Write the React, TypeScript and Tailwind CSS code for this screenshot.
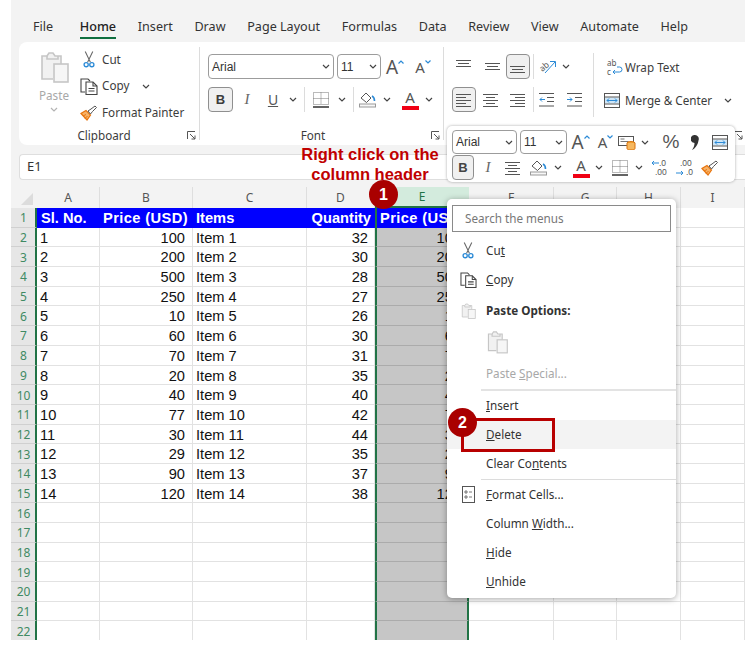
import type { ReactNode } from "react";

const TABS = ["File", "Home", "Insert", "Draw", "Page Layout", "Formulas", "Data", "Review", "View", "Automate", "Help"];
const COLS = ["A", "B", "C", "D", "E", "F", "G", "H", "I"];
const ROWS = [
  [1, 100, 32], [2, 200, 30], [3, 500, 28], [4, 250, 27], [5, 10, 26], [6, 60, 30], [7, 70, 31],
  [8, 20, 35], [9, 40, 40], [10, 77, 42], [11, 30, 44], [12, 29, 35], [13, 90, 37], [14, 120, 38],
];
const EMPTY_ROWS = [16, 17, 18, 19, 20, 21, 22];

const Chev = ({ className = "" }: { className?: string }) => (
  <svg viewBox="0 0 8 5" className={`h-[5px] w-[8px] ${className}`} fill="none" stroke="#444" strokeWidth="1.2">
    <path d="M1 1l3 3 3-3" />
  </svg>
);

const Launcher = () => (
  <svg viewBox="0 0 9 9" className="h-[9px] w-[9px]" fill="none" stroke="#555" strokeWidth="1">
    <path d="M.5 8V.5H8M3 3l5 5M8 4.5V8H4.5" />
  </svg>
);

const PasteIcon = ({ className = "" }: { className?: string }) => (
  <svg viewBox="0 0 29 32" className={className} fill="none" stroke="#c6c6c6" strokeWidth="1.6">
    <path d="M13 28H2V5h5l2-3h4l2 3h6v8" fill="#f1f1f1" />
    <path d="M7 5v3h11V5" />
    <rect x="14" y="13" width="14" height="18" fill="#f6f6f6" />
  </svg>
);

const Scissors = ({ className = "" }: { className?: string }) => (
  <svg viewBox="0 0 12 18" className={className} fill="none" strokeWidth="1.1">
    <path d="M2 .5l5.5 11.5M10 .5L4.5 12" stroke="#666" />
    <circle cx="3" cy="14.5" r="2.2" stroke="#2b8ad6" strokeWidth="1.4" />
    <circle cx="9" cy="14.5" r="2.2" stroke="#2b8ad6" strokeWidth="1.4" />
  </svg>
);

const CopyIcon = ({ className = "" }: { className?: string }) => (
  <svg viewBox="0 0 18 17" className={className} fill="none" stroke="#444" strokeWidth="1.1">
    <path d="M5 14H1V1h7l2 2" />
    <path d="M6 4h7l4 4v8.5H6z" fill="#fff" />
    <path d="M13 4v4h4M8.5 10.5h6M8.5 13h6" />
  </svg>
);

const Painter = ({ className = "" }: { className?: string }) => (
  <svg viewBox="0 0 18 16" className={className} fill="none">
    <path d="M1 8.500l6 6.500 3.500-5-4.500-4.500z" fill="#f7b267" stroke="#e8750f" strokeWidth="1.2" />
    <path d="M3 11l3-1.500M5 13.500l2.500-2.500" stroke="#e8750f" />
    <path d="M8 6l2.500 3 2-2.500 4-4-1.500-1.500-4 3z" fill="#fff" stroke="#555" />
  </svg>
);

// three or five text lines, used by all the alignment buttons
const Lines = ({ rows, className = "" }: { rows: [number, number, number][]; className?: string }) => (
  <svg viewBox="0 0 16 14" className={`h-[14px] w-[16px] ${className}`} fill="none" stroke="#555" strokeWidth="1">
    {rows.map(([a, b, y]) => (
      <path key={y} d={`M${a} ${y}.5H${b}`} />
    ))}
  </svg>
);

const TOP: [number, number, number][] = [[0, 15, 0], [2, 13, 3], [0, 15, 6]];
const MID: [number, number, number][] = [[0, 15, 3], [2, 13, 6], [0, 15, 9]];
const BOT: [number, number, number][] = [[0, 15, 6], [2, 13, 9], [0, 15, 12]];
const LEFT: [number, number, number][] = [[0, 15, 1], [0, 10, 4], [0, 15, 7], [0, 10, 10], [0, 15, 13]];
const CENTER: [number, number, number][] = [[0, 15, 1], [3, 12, 4], [0, 15, 7], [3, 12, 10], [0, 15, 13]];
const RIGHT: [number, number, number][] = [[0, 15, 1], [5, 15, 4], [0, 15, 7], [5, 15, 10], [0, 15, 13]];

const Indent = ({ out }: { out?: boolean }) => (
  <svg viewBox="0 0 16 14" className="h-[14px] w-[16px]" fill="none" strokeWidth="1">
    <path d="M0 .5h15M8 4.500h7M8 8.500h7M0 13h15" stroke="#555" />
    <path d={out ? "M6 6.500H1M3 4.500l-2 2 2 2" : "M0 6.500h5M3 4.500l2 2-2 2"} stroke="#2b8ad6" />
  </svg>
);

const Borders = () => (
  <svg viewBox="0 0 16 16" className="h-[16px] w-[16px]" fill="none">
    <path d="M.5.5h15v12H.5zM8 .5v12M.5 6.500h15" stroke="#777" strokeDasharray="1 1" />
    <path d="M0 15h16" stroke="#222" strokeWidth="1.4" />
  </svg>
);

const FillIcon = () => (
  <svg viewBox="0 0 18 17" className="h-[17px] w-[18px]" fill="none">
    <path d="M2 7l5-5 5 5-4.500 4.500z" stroke="#555" fill="#fff" />
    <path d="M13 5c2 1 2.500 3 2.500 5" stroke="#2b8ad6" strokeWidth="1.600" />
    <rect x=".5" y="13" width="16" height="3" stroke="#999" fill="#f7f7f7" />
  </svg>
);

const FontColor = () => (
  <span className="flex h-[21px] w-[18px] flex-col items-center justify-end">
    <span className="text-[15px] leading-[15px] text-[#555]">A</span>
    <span className="mt-[1px] h-[4px] w-[17px] bg-[#f00014]" />
  </span>
);

const MergeIcon = () => (
  <svg viewBox="0 0 16 15" className="h-[15px] w-[16px]" fill="none">
    <path d="M1 4.500h14v6H1z" fill="#cfe6f7" />
    <rect x=".5" y=".5" width="15" height="14" stroke="#555" />
    <path d="M.5 4h15M.5 11h15" stroke="#555" />
    <path d="M3 7.500h10M5 5.500l-2 2 2 2M11 5.500l2 2-2 2" stroke="#2b8ad6" />
  </svg>
);

const Grow = ({ up }: { up?: boolean }) => (
  <span className="flex items-start">
    <span className={up ? "text-[19px] leading-[20px] text-[#555]" : "text-[15px] leading-[20px] text-[#555]"}>A</span>
    <svg viewBox="0 0 6 4" className="mt-[3px] h-[4px] w-[6px]" fill="none" stroke="#2b8ad6" strokeWidth="1.2">
      <path d={up ? "M.5 3.500l2.500-2.500 2.500 2.500" : "M.5.5l2.500 2.500 2.500-2.500"} />
    </svg>
  </span>
);

const Select = ({ label, className = "" }: { label: string; className?: string }) => (
  <span className={`flex items-center justify-between rounded-[4px] border border-[#9c9c9c] bg-white pl-[3px] pr-[3px] font-[Liberation_Sans,sans-serif] text-[12px] text-[#333] ${className}`}>
    {label}
    <Chev />
  </span>
);

const Slot = ({ className = "", children }: { className?: string; children: ReactNode }) => (
  <span className={`flex shrink-0 items-center justify-center ${className}`}>{children}</span>
);

const Sep = ({ className = "" }: { className?: string }) => <span className={`w-px shrink-0 bg-[#dcdcdc] ${className}`} />;

const Active = ({ className = "", children }: { className?: string; children: ReactNode }) => (
  <span className={`flex shrink-0 items-center justify-center rounded-[4px] border border-[#8f8f8f] bg-[#f0f0f0] ${className}`}>{children}</span>
);

function Ribbon() {
  return (
    <div className="flex h-[103px] rounded-l-lg bg-white text-[11.7px] text-[#3c3c3c]">
      {/* clipboard */}
      <div className="flex w-[180px] flex-col">
        <div className="flex h-[84px]">
          <div className="ml-[18px] flex w-[34px] flex-col items-center pt-[9px] text-[#a8a8a8]">
            <PasteIcon className="h-[32px] w-[29px]" />
            <span className="mt-[4px] leading-[16px]">Paste</span>
            <Chev className="mt-[4px] opacity-40" />
          </div>
          <div className="ml-[8px] flex flex-col pt-[4px]">
            <div className="flex h-[27px] items-center">
              <Slot className="w-[20px]"><Scissors className="h-[17px] w-[12px]" /></Slot>
              <span className="ml-[3px]">Cut</span>
            </div>
            <div className="flex h-[27px] items-center">
              <Slot className="w-[20px]"><CopyIcon className="h-[17px] w-[18px]" /></Slot>
              <span className="ml-[3px]">Copy</span>
              <Chev className="ml-[13px]" />
            </div>
            <div className="flex h-[27px] items-center">
              <Slot className="w-[20px]"><Painter className="h-[16px] w-[18px]" /></Slot>
              <span className="ml-[3px]">Format Painter</span>
            </div>
          </div>
        </div>
        <div className="flex items-center">
          <span className="ml-[2px] w-[166px] text-center leading-[18px]">Clipboard</span>
          <Launcher />
        </div>
      </div>
      <Sep className="my-[5px]" />

      {/* font */}
      <div className="flex w-[243px] flex-col">
        <div className="flex h-[84px] flex-col gap-[8px] pl-[8px] pt-[12px]">
          <div className="flex h-[25px]">
            <Select label="Arial" className="w-[126px]" />
            <Select label="11" className="ml-[3px] w-[44px]" />
            <Slot className="w-[28px]"><Grow up /></Slot>
            <Slot className="w-[28px]"><Grow /></Slot>
          </div>
          <div className="flex h-[25px] items-center">
            <Active className="h-[25px] w-[25px] font-[Liberation_Sans,sans-serif] text-[13px] font-bold">B</Active>
            <Slot className="w-[28px] font-[Liberation_Serif,serif] text-[15px] italic text-[#666]">I</Slot>
            <Slot className="w-[24px] text-[14px] text-[#555] underline">U</Slot>
            <Slot className="w-[16px]"><Chev /></Slot>
            <Sep className="ml-[3px] h-[25px]" />
            <Slot className="ml-[5px] w-[22px]"><Borders /></Slot>
            <Slot className="ml-[2px] w-[16px]"><Chev /></Slot>
            <Sep className="ml-[3px] h-[25px]" />
            <Slot className="ml-[3px] w-[22px]"><FillIcon /></Slot>
            <Slot className="w-[16px]"><Chev /></Slot>
            <Slot className="ml-[4px] w-[22px]"><FontColor /></Slot>
            <Slot className="w-[16px]"><Chev /></Slot>
          </div>
        </div>
        <div className="flex items-center">
          <span className="w-[226px] text-center leading-[18px]">Font</span>
          <span className="ml-[5px]"><Launcher /></span>
        </div>
      </div>
      <Sep className="my-[5px]" />

      {/* alignment */}
      <div className="flex flex-1 flex-col">
        <div className="flex h-[84px]">
          <div className="flex w-[149px] flex-col gap-[8px] pl-[8px] pt-[12px]">
            <div className="flex h-[25px] items-center">
              <Slot className="w-[24px]"><Lines rows={TOP} /></Slot>
              <Slot className="ml-[3px] w-[27px]"><Lines rows={MID} /></Slot>
              <Active className="h-[25px] w-[24px]"><Lines rows={BOT} /></Active>
              <Sep className="ml-[3px] h-[25px]" />
              <Slot className="ml-[3px] w-[22px]">
                <svg viewBox="0 0 18 16" className="h-[16px] w-[18px] overflow-visible" fill="none">
                  <text x="1" y="11" fontSize="8.500" fill="#555" transform="rotate(-40 5 9)">ab</text>
                  <path d="M6 14L16 3M11 2.500h5.500V8" stroke="#2b8ad6" />
                </svg>
              </Slot>
              <Slot className="ml-[1px] w-[12px]"><Chev /></Slot>
            </div>
            <div className="flex h-[25px] items-center">
              <Active className="h-[25px] w-[24px]"><Lines rows={LEFT} /></Active>
              <Slot className="ml-[3px] w-[24px]"><Lines rows={CENTER} /></Slot>
              <Slot className="ml-[3px] w-[24px]"><Lines rows={RIGHT} /></Slot>
              <Sep className="ml-[3px] h-[25px]" />
              <Slot className="w-[26px]"><Indent out /></Slot>
              <Slot className="ml-[1px] w-[27px]"><Indent /></Slot>
            </div>
          </div>
          <Sep className="mt-[11px] h-[64px]" />
          <div className="flex flex-col gap-[8px] pl-[10px] pt-[13px]">
            <div className="flex h-[25px] items-center">
              <Slot className="w-[21px]">
                <svg viewBox="0 0 16 17" className="h-[17px] w-[16px] overflow-visible" fill="none">
                  <text x="0" y="6.500" fontSize="8" fill="#555">ab</text>
                  <text x="0" y="16" fontSize="8" fill="#555">c</text>
                  <path d="M10 8h2.500a2.500 2.500 0 0 1 0 5H6M8 11l-2 2 2 2" stroke="#2b8ad6" />
                </svg>
              </Slot>
              <span>Wrap Text</span>
            </div>
            <div className="flex h-[25px] items-center">
              <span className="flex w-[21px] shrink-0"><MergeIcon /></span>
              <span>Merge &amp; Center</span>
              <Chev className="ml-[12px]" />
            </div>
          </div>
        </div>
        <div className="flex h-[18px] items-center justify-end pr-[2px]">
          <Launcher />
        </div>
      </div>
    </div>
  );
}

function Sheet() {
  const cell = "truncate border-b border-r border-[#e2e2e2] bg-white px-[3px] h-[19.7px] leading-[20px]";
  const rowHead = "flex h-[19.7px] items-center justify-center border-b border-r-2 border-b-[#d0d0d0] border-r-[#217346] bg-[#e6e6e6] pl-[1px] pt-[2px] font-[Noto_Sans,sans-serif] text-[12px] text-[#3f8a63]";
  const selected = "h-[19.7px] truncate border-x-2 border-b border-x-[#217346] border-b-[#ababab] bg-[#c6c6c6] pr-[6px] text-right leading-[20px]";
  const head = "h-[19.7px] whitespace-nowrap bg-[#0000ff] font-bold leading-[20px] text-white";
  return (
    <div className="grid h-[453px] grid-cols-[26px_63px_93px_114px_68px_94px_85px_63px_64px_64px] content-start overflow-hidden bg-white font-[Liberation_Sans,Arial,sans-serif] text-[14.67px] text-[#111]">
      <div className="flex h-[21px] items-end justify-center bg-[#f3f3f3] pb-[3px] pl-[6px]">
        <svg viewBox="0 0 12 12" className="h-[12px] w-[12px]"><path d="M12 0v12H0z" fill="#dcdcdc" /></svg>
      </div>
      {COLS.map((c) => (
        <div
          key={c}
          className={
            c === "E"
              ? "flex h-[21px] items-center justify-center border-b-2 border-[#217346] bg-[#d3ebdd] font-[Noto_Sans,sans-serif] text-[12px] text-[#217346]"
              : "flex h-[21px] items-center justify-center border-r border-[#dedede] bg-[#f3f3f3] font-[Noto_Sans,sans-serif] text-[12px] text-[#555]"
          }
        >
          {c}
        </div>
      ))}

      <div className={rowHead}>1</div>
      <div className={`${head} px-[4px]`}>Sl. No.</div>
      <div className={`${head} pl-[3px] tracking-[0.4px]`}>Price (USD)</div>
      <div className={`${head} px-[3px]`}>Items</div>
      <div className={`${head} pr-[4px] text-right`}>Quantity</div>
      <div className={`${head} overflow-hidden border-x-2 border-x-[#217346] pl-[3px] tracking-[0.4px]`}>Price (USD)</div>
      {["F", "G", "H", "I"].map((c) => (
        <div key={c} className={cell} />
      ))}

      {ROWS.map(([n, price, qty]) => (
        <div key={n} className="contents">
          <div className={rowHead}>{n + 1}</div>
          <div className={cell}>{n}</div>
          <div className={`${cell} pr-[7px] text-right`}>{price}</div>
          <div className={cell}>Item {n}</div>
          <div className={`${cell} pr-[6px] text-right`}>{qty}</div>
          <div className={selected}>{price}</div>
          {["F", "G", "H", "I"].map((c) => (
            <div key={c} className={cell} />
          ))}
        </div>
      ))}

      {EMPTY_ROWS.map((n) => (
        <div key={n} className="contents">
          <div className={rowHead}>{n}</div>
          {["A", "B", "C", "D"].map((c) => (
            <div key={c} className={cell} />
          ))}
          <div className={selected} />
          {["F", "G", "H", "I"].map((c) => (
            <div key={c} className={cell} />
          ))}
        </div>
      ))}
    </div>
  );
}

function MiniToolbar() {
  return (
    <div className="absolute left-[447px] top-[126px] flex h-[56px] w-[288px] flex-col rounded-[5px] bg-white pl-[5px] pt-[4px] text-[#444] shadow-[0_0_3px_rgba(0,0,0,0.35)]">
      <div className="flex h-[24px] items-center">
        <Select label="Arial" className="h-[24px] w-[65px]" />
        <Select label="11" className="ml-[3px] h-[24px] w-[47px]" />
        <Slot className="ml-[1px] w-[25px]"><Grow up /></Slot>
        <Slot className="w-[25px]"><Grow /></Slot>
        <Slot className="w-[18px]">
          <svg viewBox="0 0 18 15" className="h-[15px] w-[18px]" fill="none">
            <rect x=".5" y="1.500" width="15" height="9" stroke="#555" />
            <path d="M2.500 4h4M2.500 6.500h8" stroke="#777" />
            <ellipse cx="13" cy="8" rx="4" ry="1.500" fill="#f0a030" stroke="#d9730d" />
            <path d="M9 8v5.500c0 2 8 2 8 0V8" fill="#f6b860" stroke="#d9730d" />
          </svg>
        </Slot>
        <Slot className="w-[18px]"><Chev /></Slot>
        <Slot className="ml-[5px] w-[24px] font-[Liberation_Sans,sans-serif] text-[19px] text-[#555]">%</Slot>
        <Slot className="w-[24px]">
          <svg viewBox="0 0 8 15" className="h-[15px] w-[8px]"><path d="M4 0a4 4 0 0 1 3.500 5.500C7 9 5 13 1 15c2-3 2.500-5 2.500-7A4 4 0 0 1 4 0z" fill="#333" /></svg>
        </Slot>
        <Slot className="ml-[1px] w-[24px]"><MergeIcon /></Slot>
      </div>
      <div className="mt-[1px] flex h-[25px] items-center">
        <Active className="h-[25px] w-[22px] font-[Liberation_Sans,sans-serif] text-[13px] font-bold">B</Active>
        <Slot className="w-[28px] font-[Liberation_Serif,serif] text-[15px] italic text-[#666]">I</Slot>
        <Slot className="w-[22px]"><Lines rows={CENTER} /></Slot>
        <Slot className="ml-[3px] w-[24px]"><FillIcon /></Slot>
        <Slot className="w-[14px]"><Chev /></Slot>
        <Slot className="ml-[5px] w-[22px]"><FontColor /></Slot>
        <Slot className="w-[14px]"><Chev /></Slot>
        <Slot className="ml-[3px] w-[22px]"><Borders /></Slot>
        <Slot className="w-[16px]"><Chev /></Slot>
        <Slot className="ml-[1px] w-[24px]">
          <span className="relative h-[18px] w-[18px] font-[Liberation_Sans,sans-serif] text-[8.5px] leading-[9px] text-[#555]">
            <span className="block pl-[8px]">.0</span>
            <span className="block pl-[4px]">.00</span>
            <svg viewBox="0 0 8 6" className="absolute left-0 top-[1px] h-[6px] w-[8px]" fill="none" stroke="#2b8ad6"><path d="M8 3H1M3 1L1 3l2 2" /></svg>
          </span>
        </Slot>
        <Slot className="ml-[1px] w-[24px]">
          <span className="relative h-[18px] w-[18px] font-[Liberation_Sans,sans-serif] text-[8.5px] leading-[9px] text-[#555]">
            <span className="block pl-[4px]">.00</span>
            <span className="block pl-[10px]">.0</span>
            <svg viewBox="0 0 8 6" className="absolute left-0 top-[11px] h-[6px] w-[8px]" fill="none" stroke="#2b8ad6"><path d="M0 3h7M5 1l2 2-2 2" /></svg>
          </span>
        </Slot>
        <Slot className="w-[26px]"><Painter className="h-[16px] w-[18px]" /></Slot>
      </div>
    </div>
  );
}

const MenuItem = ({ icon, children, className = "" }: { icon?: ReactNode; children: ReactNode; className?: string }) => (
  <div className={`flex h-[29px] shrink-0 items-center ${className}`}>
    <Slot className="w-[39px] pl-[3px]">{icon}</Slot>
    <span>{children}</span>
  </div>
);

function ContextMenu() {
  return (
    <div className="absolute left-[447px] top-[199px] flex h-[399px] w-[229px] flex-col rounded-[5px] bg-white font-[Noto_Sans,sans-serif] text-[11.7px] text-[#333] shadow-[0_1px_6px_rgba(0,0,0,0.35)]">
      <div className="mx-[5px] mt-[6px] flex h-[27px] shrink-0 items-center border border-[#8a8a8a] pl-[12px] text-[#777]">Search the menus</div>
      <div className="h-[4px] shrink-0" />
      <MenuItem icon={<Scissors className="h-[17px] w-[12px]" />}>Cu<u>t</u></MenuItem>
      <MenuItem icon={<CopyIcon className="h-[16px] w-[17px]" />}><u>C</u>opy</MenuItem>
      <MenuItem className="mt-[2px]" icon={<PasteIcon className="h-[16px] w-[15px]" />}><b className="font-bold">Paste Options:</b></MenuItem>
      <div className="flex h-[33px] shrink-0 items-center pl-[40px]">
        <PasteIcon className="h-[24px] w-[21px]" />
      </div>
      <MenuItem className="mt-[1px] text-[#a8a8a8]">Paste <u>S</u>pecial...</MenuItem>
      <div className="ml-[34px] mt-[1px] h-[2px] shrink-0 bg-[#e3e3e3]" />
      <MenuItem><u>I</u>nsert</MenuItem>
      <MenuItem className="bg-[#f3f3f3]"><u>D</u>elete</MenuItem>
      <MenuItem>Clear Co<u>n</u>tents</MenuItem>
      <div className="ml-[34px] mt-[1px] h-px shrink-0 bg-[#dcdcdc]" />
      <MenuItem
        icon={
          <svg viewBox="0 0 13 17" className="h-[17px] w-[13px]" fill="none" stroke="#555">
            <rect x=".5" y=".5" width="12" height="16" />
            <path d="M3 5h2v2H3zM3 10h2v2H3zM7 6h3M7 11h3" strokeWidth=".8" />
          </svg>
        }
      >
        <u>F</u>ormat Cells...
      </MenuItem>
      <MenuItem>Column <u>W</u>idth...</MenuItem>
      <MenuItem><u>H</u>ide</MenuItem>
      <MenuItem><u>U</u>nhide</MenuItem>
    </div>
  );
}

const Badge = ({ n, className }: { n: number; className: string }) => (
  <div className={`absolute flex h-[29px] w-[29px] items-center justify-center rounded-full bg-[#a90000] font-[Liberation_Sans,sans-serif] text-[16px] font-bold text-white ${className}`}>
    {n}
  </div>
);

export default function App() {
  return (
    <div className="relative h-[646px] w-[754px] overflow-hidden bg-white">
      <div className="ml-[11px] w-[734px] bg-[#f3f3f3] pt-[9px] font-[Noto_Sans,sans-serif]">
        <div className="flex h-[33px] items-center gap-[21.7px] pl-[22px] pt-[3px] text-[12.6px] text-[#333]">
          {TABS.map((t) => (
            <span key={t} className={t === "Home" ? "relative ml-[5px] font-medium text-[#222]" : ""}>
              {t}
              {t === "Home" && <span className="absolute -bottom-[3px] left-0 right-0 h-[2px] bg-[#0f6f3f]" />}
            </span>
          ))}
        </div>
        <div className="ml-[8px]">
          <Ribbon />
        </div>
        <div className="ml-[8px] mt-[9px] flex h-[26px] items-center rounded-l-[4px] border border-r-0 border-[#dedede] bg-white pl-[7px] text-[13px] text-[#333]">E1</div>
        <div className="h-[7px]" />
        <Sheet />
      </div>

      <p className="absolute left-[290px] top-[144px] w-[160px] text-center font-[Liberation_Sans,sans-serif] text-[16.5px] font-bold leading-[20px] text-[#c00000]">
        Right click on the column header
      </p>
      <Badge n={1} className="left-[369px] top-[180px]" />

      <MiniToolbar />
      <ContextMenu />

      <div className="absolute left-[461px] top-[418px] h-[34px] w-[94px] border-[3px] border-[#b80000]" />
      <Badge n={2} className="left-[448px] top-[408px]" />
    </div>
  );
}
